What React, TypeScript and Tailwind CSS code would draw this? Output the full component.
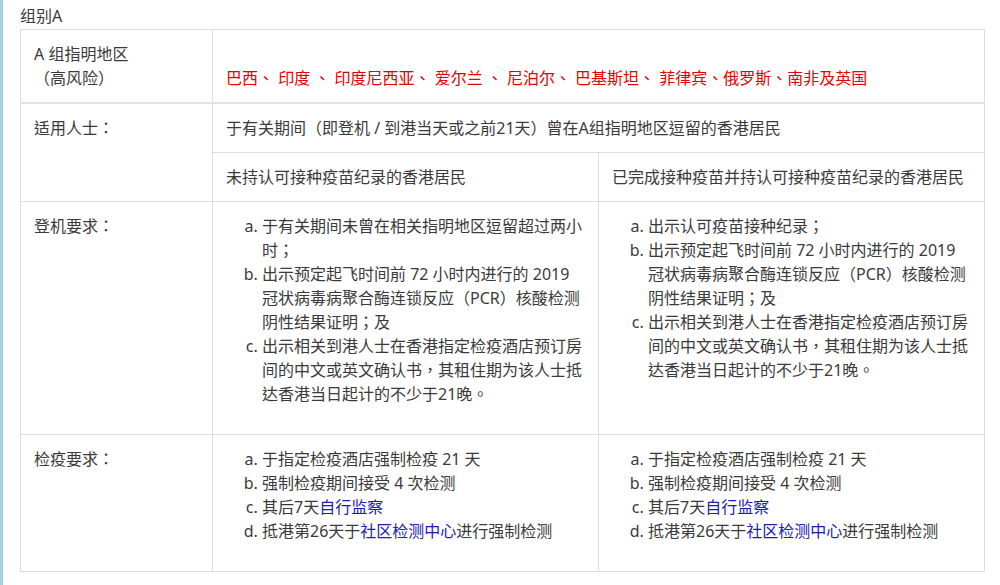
import React from "react";

const boarding = {
  unvaccinated: [
    "于有关期间未曾在相关指明地区逗留超过两小时；",
    "出示预定起飞时间前 72 小时内进行的 2019 冠状病毒病聚合酶连锁反应（PCR）核酸检测阴性结果证明；及",
    "出示相关到港人士在香港指定检疫酒店预订房间的中文或英文确认书，其租住期为该人士抵达香港当日起计的不少于21晚。",
  ],
  vaccinated: [
    "出示认可疫苗接种纪录；",
    "出示预定起飞时间前 72 小时内进行的 2019 冠状病毒病聚合酶连锁反应（PCR）核酸检测阴性结果证明；及",
    "出示相关到港人士在香港指定检疫酒店预订房间的中文或英文确认书，其租住期为该人士抵达香港当日起计的不少于21晚。",
  ],
};

const cell = "border border-[#dddddd] px-[13px] py-3 align-top text-left font-normal";

const QuarantineList: React.FC = () => (
  <ol className="list-[lower-alpha] pl-9 mb-4">
    <li>于指定检疫酒店强制检疫 21 天</li>
    <li>强制检疫期间接受 4 次检测</li>
    <li>
      其后7天<a className="text-[#1c1cb0]">自行监察</a>
    </li>
    <li>
      抵港第26天于<a className="text-[#1c1cb0]">社区检测中心</a>进行强制检测
    </li>
  </ol>
);

export default function App() {
  return (
    <div
      className="flex h-[585px] bg-white text-[16px] leading-6 text-[#3a3a3a]"
      style={{ fontFamily: '"Noto Sans", "Noto Sans CJK TC", sans-serif' }}
    >
      <div className="w-[3px] shrink-0 bg-[#a3d2de]" />
      <div className="pl-[17px] pt-1">
        <div className="h-6 mb-px">组别A</div>
        <table className="w-[964px] table-fixed border-collapse">
          <colgroup>
            <col className="w-[192px]" />
            <col className="w-[386px]" />
            <col className="w-[386px]" />
          </colgroup>
          <tbody>
            <tr className="border-b-2 border-[#e2e2e2]">
              <th className={cell}>
                A 组指明地区
                <br />
                （高风险）
              </th>
              <td colSpan={2} className={`${cell} !align-bottom text-[#e60000]`}>
                巴西、 印度 、 印度尼西亚、 爱尔兰 、 尼泊尔、 巴基斯坦、 菲律宾、俄罗斯、南非及英国
              </td>
            </tr>
            <tr>
              <td rowSpan={2} className={cell}>
                适用人士：
              </td>
              <td colSpan={2} className={cell}>
                于有关期间（即登机 / 到港当天或之前21天）曾在A组指明地区逗留的香港居民
              </td>
            </tr>
            <tr>
              <td className={cell}>未持认可接种疫苗纪录的香港居民</td>
              <td className={cell}>已完成接种疫苗并持认可接种疫苗纪录的香港居民</td>
            </tr>
            <tr>
              <td className={cell}>登机要求：</td>
              <td className={cell}>
                <ol className="list-[lower-alpha] pl-9 mb-4">
                  {boarding.unvaccinated.map((t) => (
                    <li key={t}>{t}</li>
                  ))}
                </ol>
              </td>
              <td className={cell}>
                <ol className="list-[lower-alpha] pl-9 mb-4">
                  {boarding.vaccinated.map((t) => (
                    <li key={t}>{t}</li>
                  ))}
                </ol>
              </td>
            </tr>
            <tr>
              <td className={cell}>检疫要求：</td>
              <td className={cell}>
                <QuarantineList />
              </td>
              <td className={cell}>
                <QuarantineList />
              </td>
            </tr>
          </tbody>
        </table>
      </div>
    </div>
  );
}
